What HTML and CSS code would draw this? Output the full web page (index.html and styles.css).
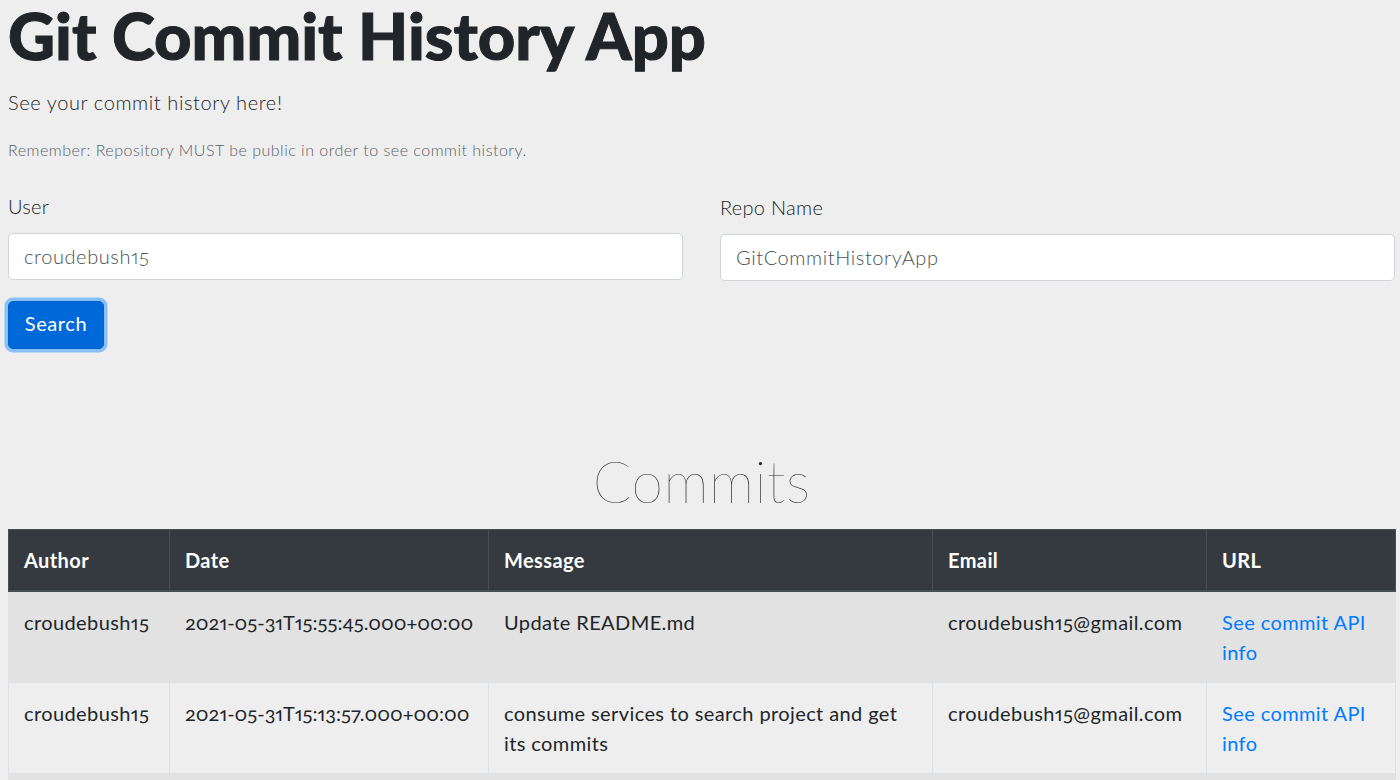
FILE: index.html
```html
<!DOCTYPE html>
<html lang="en">
<head>
<meta charset="utf-8">
<title>Git Commit History App</title>
<link rel="stylesheet" href="styles.css">
</head>
<body>
<div class="page">
  <h1 class="title">Git Commit History App</h1>
  <p class="lead">See your commit history here!</p>
  <p class="note">Remember: Repository MUST be public in order to see commit history.</p>

  <form class="search-form">
    <div class="fields">
      <div class="field">
        <label class="field-label" for="user">User</label>
        <input class="field-input" id="user" type="text" value="croudebush15">
      </div>
      <div class="field field-right">
        <label class="field-label" for="repo">Repo Name</label>
        <input class="field-input" id="repo" type="text" value="GitCommitHistoryApp">
      </div>
    </div>
    <button class="search-btn" type="button">Search</button>
  </form>

  <h2 class="commits-title">Commits</h2>

  <table class="commits">
    <colgroup>
      <col class="c-author"><col class="c-date"><col class="c-msg"><col class="c-email"><col class="c-url">
    </colgroup>
    <thead>
      <tr><th>Author</th><th>Date</th><th>Message</th><th>Email</th><th>URL</th></tr>
    </thead>
    <tbody>
      <tr>
        <td>croudebush15</td>
        <td class="date">2021-05-31T15:55:45.000+00:00</td>
        <td>Update README.md</td>
        <td>croudebush15@gmail.com</td>
        <td><a href="#">See commit API info</a></td>
      </tr>
      <tr>
        <td>croudebush15</td>
        <td class="date">2021-05-31T15:13:57.000+00:00</td>
        <td>consume services to search project and get its commits</td>
        <td>croudebush15@gmail.com</td>
        <td><a href="#">See commit API info</a></td>
      </tr>
      <tr>
        <td>croudebush15</td>
        <td class="date">2021-05-31T14:40:12.000+00:00</td>
        <td>Initial commit</td>
        <td>croudebush15@gmail.com</td>
        <td><a href="#">See commit API info</a></td>
      </tr>
    </tbody>
  </table>
</div>
</body>
</html>
```
FILE: styles.css
```css
* { box-sizing: border-box; }
html, body { margin: 0; padding: 0; }
body {
  background: #eeeeee;
  color: #212529;
  font-family: Lato, "Open Sans", sans-serif;
  font-size: 20px;
  font-variant-numeric: oldstyle-nums proportional-nums;
  overflow: hidden;
}
.page {
  width: 1395px;
  padding-left: 8px;
}
.title {
  margin: 0 0 15px;
  font-size: 65px;
  line-height: 1.1;
  font-weight: 900;
  letter-spacing: 0;
  -webkit-text-stroke: 1px #212529;
}
.lead {
  margin: 0;
  font-size: 20px;
  line-height: 30px;
  font-weight: 300;
  letter-spacing: 0.6px;
}
.note {
  margin: 21px 0 0;
  font-size: 16px;
  line-height: 24px;
  color: #596168;
  font-weight: 300;
  letter-spacing: 0.5px;
}
.search-form { margin: 29px 0 0; }
.fields {
  display: grid;
  grid-template-columns: 675px 675px;
  column-gap: 37px;
}
.field { display: flex; flex-direction: column; }
.field-label {
  font-size: 20px;
  line-height: 30px;
  font-weight: 300;
  letter-spacing: 0.3px;
  margin-bottom: 12px;
}
.field-right .field-label { margin-top: 1px; margin-bottom: 12px; }
.field-input {
  height: 47px;
  width: 100%;
  padding: 0 15px;
  border: 1px solid #ced4da;
  border-radius: 5px;
  background: #fff;
  color: #495057;
  font-family: inherit;
  font-size: 20px;
  font-weight: 300;
  font-variant-numeric: oldstyle-nums proportional-nums;
  letter-spacing: 0.6px;
  outline: none;
}
.search-btn {
  display: block;
  margin-top: 20px;
  width: 96px;
  height: 48px;
  padding: 0 0 4px;
  background: #0069d9;
  border: 1px solid #0062cc;
  border-radius: 5px;
  color: #fff;
  font-family: inherit;
  font-size: 20px;
  font-weight: 400;
  letter-spacing: 0.6px;
  box-shadow: 0 0 0 3.5px rgba(38, 143, 255, 0.5);
}
.commits-title {
  margin: 98px 0 0;
  text-align: center;
  font-size: 57px;
  line-height: 1.2;
  font-weight: 100;
  letter-spacing: 0.5px;
}
.commits {
  margin-top: 14px;
  width: 1387px;
  border-collapse: collapse;
  table-layout: fixed;
}
.c-author { width: 161px; }
.c-date { width: 319px; }
.c-msg { width: 444px; }
.c-email { width: 274px; }
.c-url { width: 189px; }
.commits th, .commits td {
  padding: 15px;
  text-align: left;
  vertical-align: top;
  line-height: 30px;
  font-size: 20px;
}
.commits th {
  background: #343a40;
  color: #fff;
  font-weight: 700;
  letter-spacing: 0.4px;
  border: 1px solid #454d55;
  border-bottom: 2px solid #454d55;
}
.commits td {
  border: 1px solid #dee2e6;
  font-weight: 400;
  letter-spacing: 0.4px;
}
.commits td.date { white-space: nowrap; letter-spacing: 0; }
.commits tbody tr:nth-child(odd) td { background: #e2e2e2; }
.commits a { color: #007bff; text-decoration: none; }
```
